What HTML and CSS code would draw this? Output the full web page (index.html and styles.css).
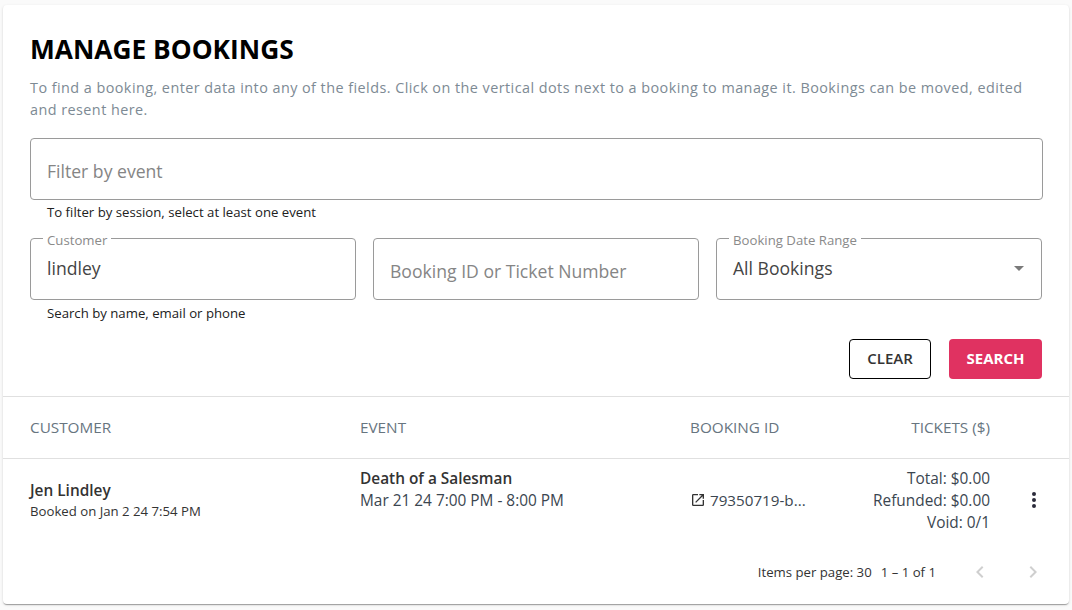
FILE: index.html
```html
<!DOCTYPE html>
<html lang="en">
<head>
<meta charset="utf-8">
<title>Manage Bookings</title>
<link rel="stylesheet" href="styles.css">
</head>
<body>
<main class="card">
  <section class="filters">
    <h1 class="title">MANAGE BOOKINGS</h1>
    <p class="intro">To find a booking, enter data into any of the fields. Click on the vertical dots next to a booking to manage it. Bookings can be moved, edited and resent here.</p>
    <div class="field field-wide"><span class="placeholder">Filter by event</span></div>
    <div class="hint hint-wide">To filter by session, select at least one event</div>
    <div class="field-row">
      <div class="field-col">
        <div class="field"><span class="legend">Customer</span><span class="value">lindley</span></div>
        <div class="hint">Search by name, email or phone</div>
      </div>
      <div class="field-col">
        <div class="field"><span class="placeholder">Booking ID or Ticket Number</span></div>
      </div>
      <div class="field-col">
        <div class="field"><span class="legend">Booking Date Range</span><span class="value">All Bookings</span><span class="caret"></span></div>
      </div>
    </div>
    <div class="actions">
      <button class="btn btn-clear">CLEAR</button>
      <button class="btn btn-search">SEARCH</button>
    </div>
  </section>
  <div class="row header">
    <div class="c-customer">CUSTOMER</div>
    <div class="c-event">EVENT</div>
    <div class="c-id">BOOKING ID</div>
    <div class="c-tickets">TICKETS ($)</div>
  </div>
  <div class="row body">
    <div class="c-customer">
      <div class="name">Jen Lindley</div>
      <div class="booked">Booked on Jan 2 24 7:54 PM</div>
    </div>
    <div class="c-event event-cell">
      <div class="name">Death of a Salesman</div>
      <div>Mar 21 24 7:00 PM - 8:00 PM</div>
    </div>
    <div class="c-id id-cell">
      <svg class="ext" viewBox="0 0 24 24" width="16" height="16"><path fill="currentColor" d="M19 19H5V5h7V3H5a2 2 0 0 0-2 2v14a2 2 0 0 0 2 2h14a2 2 0 0 0 2-2v-7h-2v7zM14 3v2h3.59l-9.83 9.83 1.41 1.41L19 6.41V10h2V3h-7z"/></svg>
      <span>79350719-b...</span>
    </div>
    <div class="c-tickets tickets-cell">
      <div>Total: $0.00</div>
      <div>Refunded: $0.00</div>
      <div>Void: 0/1</div>
    </div>
    <div class="c-menu">
      <svg viewBox="0 0 24 24" width="24" height="24"><path fill="currentColor" d="M12 8a2 2 0 1 0 0-4 2 2 0 0 0 0 4zm0 2a2 2 0 1 0 0 4 2 2 0 0 0 0-4zm0 6a2 2 0 1 0 0 4 2 2 0 0 0 0-4z"/></svg>
    </div>
  </div>
  <div class="paginator">
    <span>Items per page: 30</span>
    <span class="range">1 – 1 of 1</span>
    <svg class="page-btn" viewBox="0 0 24 24" width="24" height="24"><path fill="currentColor" d="M15.41 7.41 14 6l-6 6 6 6 1.41-1.41L10.83 12z"/></svg>
    <svg class="page-btn page-next" viewBox="0 0 24 24" width="24" height="24"><path fill="currentColor" d="M10 6 8.59 7.41 13.17 12l-4.58 4.59L10 18l6-6z"/></svg>
  </div>
</main>
</body>
</html>
```
FILE: styles.css
```css
* { box-sizing: border-box; }
html, body { margin: 0; height: 100%; }
body {
  background: #fafafa;
  padding: 5px 3px 0;
  font-family: "Open Sans", "Liberation Sans", sans-serif;
  color: #212529;
  overflow: hidden;
}
.card {
  background: #fff;
  height: 599px;
  border-radius: 4px;
  box-shadow: 0 2px 1px -1px rgba(0,0,0,.2), 0 1px 1px rgba(0,0,0,.14), 0 1px 3px rgba(0,0,0,.12);
}
.filters { padding: 26px 27px 0; height: 392px; border-bottom: 1px solid #e0e0e0; }
.title { margin: 0; font-size: 26.3px; line-height: 36px; font-weight: 700; color: #000; }
.intro { margin: 10px 0 0; font-size: 14.4px; line-height: 22px; color: #7d8a94; letter-spacing: .45px; }
.field {
  position: relative;
  height: 62px;
  border: 1px solid #9a9a9a;
  border-radius: 4px;
  padding: 0 16px;
  display: flex;
  align-items: center;
  font-size: 17.6px;
}
.field-wide { margin-top: 17px; width: 1013px; }
.placeholder { color: #858585; margin-top: 3px; }
.value { color: #444; margin-top: -3px; }
.legend {
  position: absolute;
  left: 12px;
  top: -8px;
  padding: 0 4px;
  background: #fff;
  font-size: 13.2px;
  line-height: 18px;
  color: #8a8a8a;
}
.hint { padding-left: 17px; margin-top: 3px; font-size: 13.2px; line-height: 18px; color: #212121; }
.field-col .hint { margin-top: 4px; }
.hint-wide { margin-bottom: 17px; }
.field-row { display: flex; gap: 17px; width: 1012px; }
.field-col { flex: 1 1 0; min-width: 0; }
.caret {
  position: absolute;
  right: 17px;
  top: 27px;
  border-left: 5.5px solid transparent;
  border-right: 5.5px solid transparent;
  border-top: 5.5px solid #7a7a7a;
}
.actions { display: flex; justify-content: flex-end; gap: 18px; width: 1012px; margin-top: 17px; }
.btn {
  height: 40px;
  border-radius: 4px;
  font-family: inherit;
  font-size: 15px;
  font-weight: 600;
  padding: 0 0 2px;
}
.btn-clear { width: 82px; background: #fff; border: 1px solid #000; color: #333; }
.btn-search { width: 93px; background: #e03261; border: 0; color: #fff; font-weight: 700; }
.row { display: flex; padding-left: 27px; }
.header { height: 62px; padding-bottom: 2px; align-items: center; border-bottom: 1px solid #e0e0e0; font-size: 15.3px; color: #67757f; }
.body { height: 81px; align-items: center; font-size: 15.4px; line-height: 22px; color: #3b4650; }
.c-customer { width: 330px; }
.c-event { width: 330px; }
.c-id { width: 120px; }
.c-tickets { width: 180px; text-align: right; }
.tickets-cell { padding-top: 2px; }
.event-cell { align-self: flex-start; padding-top: 9px; }
.name { color: #333; font-weight: 600; font-size: 15.4px; line-height: 22px; }
.booked { font-size: 13.2px; line-height: 18px; color: #333; }
.id-cell { display: flex; align-items: center; gap: 4px; white-space: nowrap; font-size: 15.2px; }
.ext { color: #333; flex: none; }
.c-menu { margin-left: 32px; width: 24px; height: 24px; color: #2b2b3a; }
.c-menu svg { display: block; }
.paginator {
  display: flex;
  align-items: center;
  justify-content: flex-end;
  height: 64px;
  padding-right: 24px;
  font-size: 13.2px;
  color: #333;
}
.range { margin-left: 9px; margin-right: 32px; }
.page-btn { color: #cfcfcf; }
.page-next { margin-left: 29px; }
```
